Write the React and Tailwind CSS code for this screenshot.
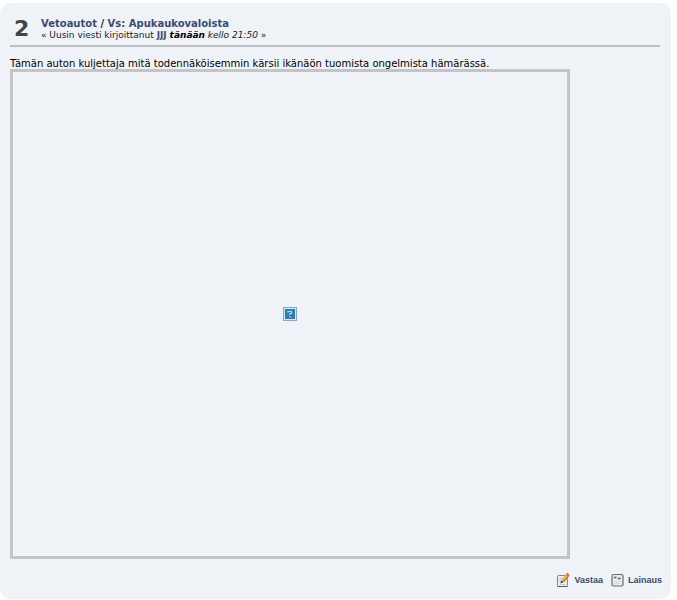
function ReplyIcon() {
  return (
    <svg width="14" height="16" viewBox="0 0 14 16" fill="none" aria-hidden="true">
      <rect x="1.5" y="3.5" width="10" height="11" rx="1" fill="#ececf0" stroke="#85858e" />
      <path d="M1.5 14.5h10" stroke="#5a5a63" />
      <path d="M3.5 6.5h3M3.5 8.5h1.5M4 12.5h5.5" stroke="#c3c4ce" />
      <path d="M5 10.5l.8-3L10 2.4l2.8 2.1-4.3 5.2z" fill="#f0ad4c" />
      <path d="M8.5 9.7l4.3-5.2-1-.8-4.6 5.5z" fill="#c27a30" />
      <path d="M9.8 2.4l1.3-1.7 2.6 2-1.2 1.8z" fill="#cf7340" />
      <path d="M4.3 11.4l1.1-2.9 2.2 1.6z" fill="#4a2a22" />
    </svg>
  )
}

function QuoteIcon() {
  return (
    <svg width="13" height="14" viewBox="0 0 13 14" fill="none" aria-hidden="true">
      <rect x="1" y="1.5" width="11" height="11.5" rx="1.5" fill="#e9e9ed" stroke="#6a6a72" strokeWidth="1.2" />
      <path d="M3 4.5h2.5M7 5.5h2.5" stroke="#55565f" strokeWidth="1.4" />
      <path d="M3 8.5h6M3 10.5h6" stroke="#dcdde3" />
    </svg>
  )
}

function MissingImage() {
  return (
    <svg width="14" height="14" viewBox="0 0 14 14" role="img" aria-label="">
      <rect x="0.5" y="0.5" width="13" height="13" fill="#d3e6f3" stroke="#86a9c3" />
      <rect x="2" y="2" width="10" height="10" fill="#2f7fb5" />
      <path d="M5 5.5V4.5h3.5v2H7V8" fill="none" stroke="#b5d8ec" strokeWidth="1.2" />
      <rect x="6.3" y="9" width="1.4" height="1.4" fill="#b5d8ec" />
    </svg>
  )
}

function PostHeader({ number, board, subject, author }) {
  return (
    <header className="flex items-start border-b-2 border-[#bfc0c4] h-[29px]">
      <div className="w-[31px] pl-1 text-[22px] leading-[22px] font-bold text-[#444444]">{number}</div>
      <div className="text-[#222222]">
        <h5 className="text-[10px] leading-3 font-bold">
          <a href="#board" className="text-[#3b4a72]">{board}</a>
          {' / '}
          <a href="#topic" className="text-[#3b4a72]">{subject}</a>
        </h5>
        <p className="text-[9px] leading-[11px]">
          « Uusin viesti kirjoittanut{' '}
          <a href="#author" className="font-bold text-[#3b4a72]">{author}</a>{' '}
          <em><strong className="text-black">tänään</strong> kello 21:50</em> »
        </p>
      </div>
    </header>
  )
}

function PostActions() {
  return (
    <div className="flex justify-end items-center gap-2 mt-[13px] pl-2 text-[9px] leading-4 font-bold text-[#3b4a72] font-['Liberation_Sans',Arial,sans-serif]">
      <a href="#reply" className="flex items-center gap-1">
        <ReplyIcon />
        Vastaa
      </a>
      <a href="#quote" className="flex items-center gap-1">
        <QuoteIcon />
        Lainaus
      </a>
    </div>
  )
}

function App() {
  return (
    <div className="min-h-screen bg-white pt-[3px] pr-[6px] font-['DejaVu_Sans',Verdana,sans-serif]">
      <article className="rounded-[10px] bg-[#eff3f7] pt-[15px] pb-[11px]">
        <div className="pl-[10px] pr-[11px]">
          <PostHeader
            number={2}
            board="Vetoautot"
            subject="Vs: Apukaukovaloista"
            author="JJJ"
          />
          <p className="mt-3 text-[10px] leading-[10px] text-black">
            Tämän auton kuljettaja mitä todennäköisemmin kärsii ikänäön tuomista ongelmista hämärässä.
          </p>
          <div className="flex items-center justify-center w-full max-w-[560px] h-[490px] border-3 border-[#c4c4c6]">
            <MissingImage />
          </div>
        </div>
        <div className="pr-[9px]">
          <PostActions />
        </div>
      </article>
    </div>
  )
}

export default App
